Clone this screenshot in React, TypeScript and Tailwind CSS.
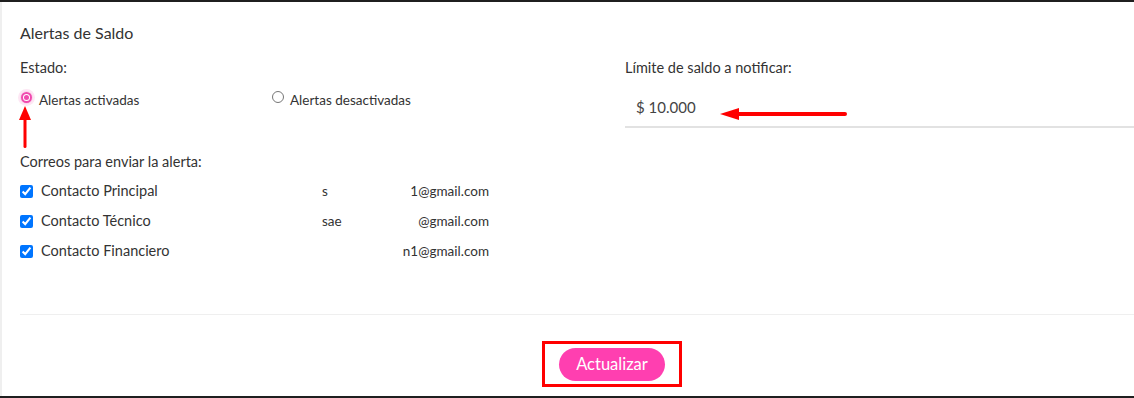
import React from 'react'

const CONTACTS = [
  { label: 'Contacto Principal', head: 's', tail: '1@gmail.com' },
  { label: 'Contacto Técnico', head: 'sae', tail: '@gmail.com' },
  { label: 'Contacto Financiero', head: '', tail: 'n1@gmail.com' },
]

const Radio: React.FC<{ checked?: boolean; label: string }> = ({ checked, label }) => (
  <label className="flex items-start gap-[6px] cursor-pointer">
    {checked ? (
      <span className="mt-[1px] w-[13px] h-[13px] rounded-full flex items-center justify-center bg-[#fbd3ec] shadow-[0_0_0_2px_#fde7f4]">
        <span className="w-[11px] h-[11px] rounded-full border-2 border-[#f04aae] bg-white flex items-center justify-center">
          <span className="w-[5px] h-[5px] rounded-full bg-[#f04aae]" />
        </span>
      </span>
    ) : (
      <span className="mt-[1px] w-[12px] h-[12px] rounded-full border border-[#767676] bg-white" />
    )}
    <span className="text-[13.5px] leading-5 text-[#333]">{label}</span>
  </label>
)

export default function App() {
  return (
    <div
      className="relative w-full h-[398px] bg-white border-t-2 border-b-2 border-[#1f1f1f] flex"
      style={{ fontFamily: 'Lato, "Noto Sans", sans-serif' }}
    >
      <div className="w-[2px] bg-[#efefef]" />
      <div className="flex-1 flex flex-col">
        <div className="pl-[18px] pt-[21px] h-[312px]">
          <h3 className="text-[16px] leading-5 text-[#333]">Alertas de Saldo</h3>
          <div className="mt-[15px] grid grid-cols-[605px_1fr]">
            <div>
              <p className="text-[14.5px] leading-5 text-[#333]">Estado:</p>
              <div className="mt-[12px] h-5 flex">
                <div className="w-[252px]">
                  <Radio checked label="Alertas activadas" />
                </div>
                <Radio label="Alertas desactivadas" />
              </div>
              <p className="mt-[42px] text-[14.5px] leading-5 text-[#333]">Correos para enviar la alerta:</p>
              <div className="mt-1">
                {CONTACTS.map(c => (
                  <div key={c.label} className="h-[30px] flex items-center">
                    <input
                      type="checkbox"
                      checked
                      readOnly
                      className="m-0 w-[13px] h-[13px] accent-[#0075ff]"
                    />
                    <span className="ml-[8px] w-[281px] text-[14.5px] text-[#333]">{c.label}</span>
                    <div className="w-[167px] flex justify-between text-[13.5px] text-[#333]">
                      <span>{c.head}</span>
                      <span>{c.tail}</span>
                    </div>
                  </div>
                ))}
              </div>
            </div>
            <div>
              <p className="text-[14.5px] leading-5 text-[#333]">Límite de saldo a notificar:</p>
              <div className="mt-[10px] h-[40px] border-b-2 border-[#e2e2e2] pl-[11px] flex items-center text-[15px] text-[#444]">
                $ 10.000
              </div>
            </div>
          </div>
        </div>
        <div className="ml-[18px] h-px bg-[#efefef]" />
        <div className="pt-[26px] pl-[540px]">
          <span className="inline-flex border-[3px] border-[#ff0000] px-[14px] pt-[4px] pb-[3px]">
            <button className="w-[106px] h-[33px] rounded-full bg-[#ff3fb0] text-white text-[16.5px]">
              Actualizar
            </button>
          </span>
        </div>
      </div>

      {/* annotation arrows */}
      <svg className="absolute left-[18px] top-[104px]" width="14" height="42" viewBox="0 0 14 42">
        <polygon points="7,0 13,14 1,14" fill="#ff0000" />
        <rect x="5.5" y="12" width="3" height="30" rx="1.5" fill="#ff0000" />
      </svg>
      <svg className="absolute left-[720px] top-[104px]" width="128" height="16" viewBox="0 0 128 16">
        <polygon points="0,8 19,2 19,14" fill="#ff0000" />
        <rect x="16" y="6" width="111" height="4" rx="2" fill="#ff0000" />
      </svg>
    </div>
  )
}
